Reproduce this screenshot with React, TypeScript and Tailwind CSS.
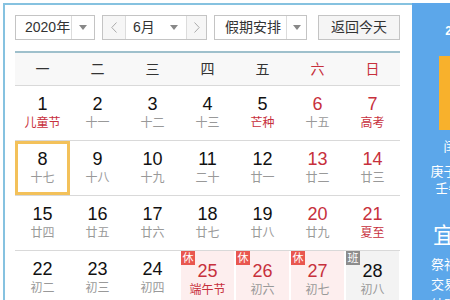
import React from 'react';

type Day = {
  d: number;
  lunar: string;
  red?: boolean;
  lunarRed?: boolean;
  badge?: 'rest' | 'work';
  today?: boolean;
};

const weeks: Day[][] = [
  [
    { d: 1, lunar: '儿童节', lunarRed: true },
    { d: 2, lunar: '十一' },
    { d: 3, lunar: '十二' },
    { d: 4, lunar: '十三' },
    { d: 5, lunar: '芒种', lunarRed: true },
    { d: 6, lunar: '十五', red: true },
    { d: 7, lunar: '高考', red: true, lunarRed: true },
  ],
  [
    { d: 8, lunar: '十七', today: true },
    { d: 9, lunar: '十八' },
    { d: 10, lunar: '十九' },
    { d: 11, lunar: '二十' },
    { d: 12, lunar: '廿一' },
    { d: 13, lunar: '廿二', red: true },
    { d: 14, lunar: '廿三', red: true },
  ],
  [
    { d: 15, lunar: '廿四' },
    { d: 16, lunar: '廿五' },
    { d: 17, lunar: '廿六' },
    { d: 18, lunar: '廿七' },
    { d: 19, lunar: '廿八' },
    { d: 20, lunar: '廿九', red: true },
    { d: 21, lunar: '夏至', red: true, lunarRed: true },
  ],
  [
    { d: 22, lunar: '初二' },
    { d: 23, lunar: '初三' },
    { d: 24, lunar: '初四' },
    { d: 25, lunar: '端午节', red: true, lunarRed: true, badge: 'rest' },
    { d: 26, lunar: '初六', red: true, badge: 'rest' },
    { d: 27, lunar: '初七', red: true, badge: 'rest' },
    { d: 28, lunar: '初八', badge: 'work' },
  ],
];

const weekdays = ['一', '二', '三', '四', '五', '六', '日'];

const Caret = () => (
  <svg width="8" height="5" viewBox="0 0 8 5" className="text-[#888]">
    <path d="M0 0h8L4 5z" fill="currentColor" />
  </svg>
);

const Chevron = ({ dir }: { dir: 'l' | 'r' }) => (
  <svg width="6" height="11" viewBox="0 0 6 11" fill="none" stroke="#aaa" strokeWidth="1">
    {dir === 'l' ? <path d="M5.5 0.5L0.8 5.5l4.7 5" /> : <path d="M0.5 0.5l4.7 5-4.7 5" />}
  </svg>
);

const Cell = ({ day }: { day: Day }) => {
  const bg =
    day.badge === 'rest' ? 'bg-[#fdeeee]' : day.badge === 'work' ? 'bg-[#f3f3f3]' : 'bg-white';
  return (
    <div className={`relative h-[54px] flex flex-col items-center justify-center ${bg} ${day.badge ? 'mx-[1px]' : ''}`}>
      {day.today && <div className="absolute inset-0 border-[3px] border-[#f3c15a]" />}
      {day.badge && (
        <div
          className={`absolute left-0 top-0 w-[14px] h-[14px] flex items-center justify-center text-[11px] leading-none text-white ${
            day.badge === 'rest' ? 'bg-[#e9574f]' : 'bg-[#8c8c8c]'
          }`}
        >
          {day.badge === 'rest' ? '休' : '班'}
        </div>
      )}
      <div className={`text-[18px] leading-[20px] ${day.red ? 'text-[#c7303c]' : 'text-[#111]'} ${day.badge ? 'mt-[4px]' : ''}`}>
        {day.d}
      </div>
      <div className={`text-[12px] leading-[17px] mt-[1px] ${day.lunarRed ? 'text-[#c7303c]' : 'text-[#999]'}`}>
        {day.lunar}
      </div>
    </div>
  );
};

export default function App() {
  return (
    <div
      className="w-[450px] h-[300px] overflow-hidden bg-white"
      style={{ fontFamily: '"Liberation Sans", Arial, "Noto Sans CJK SC", sans-serif' }}
    >
      <div className="flex pt-[3px] pl-[3px]">
        {/* left calendar */}
        <div className="w-[409px] h-[297px] shrink-0 border-l-2 border-t-2 border-[#86c2e0] pl-[10px] pr-[10px] pt-[10px]">
          {/* controls */}
          <div className="flex items-center h-[25px] text-[14px] text-[#333]">
            <div className="flex h-[25px] w-[80px] border border-[#c4c4c4] bg-white">
              <div className="w-[55px] flex items-center pl-[9px]">2020年</div>
              <div className="flex-1 flex items-center justify-center border-l border-[#dcdcdc]">
                <Caret />
              </div>
            </div>
            <div className="flex h-[25px] w-[105px] ml-[7px] border border-[#c4c4c4] bg-white">
              <div className="w-[23px] flex items-center justify-center bg-[#f6f6f6] border-r border-[#dcdcdc]">
                <Chevron dir="l" />
              </div>
              <div className="w-[60px] flex items-center justify-between pl-[7px] pr-[8px]">
                <span>6月</span>
                <Caret />
              </div>
              <div className="flex-1 flex items-center justify-center bg-[#f6f6f6] border-l border-[#dcdcdc]">
                <Chevron dir="r" />
              </div>
            </div>
            <div className="flex h-[25px] w-[93px] ml-[7px] border border-[#c4c4c4] bg-white">
              <div className="w-[71px] flex items-center pl-[10px]">假期安排</div>
              <div className="flex-1 flex items-center justify-center border-l border-[#dcdcdc]">
                <Caret />
              </div>
            </div>
            <div className="flex h-[25px] w-[82px] ml-[11px] items-center justify-center border border-[#c4c4c4] bg-[#f5f5f5]">
              返回今天
            </div>
          </div>

          {/* grid */}
          <div className="mt-[11px] w-[385px] border-t-2 border-[#9fc0cc]">
            <div className="grid grid-cols-7 h-[33px] bg-[#f8f8f8] border-b border-[#d9d9d9] text-[14px]">
              {weekdays.map((w, i) => (
                <div key={w} className={`flex items-center justify-center ${i >= 5 ? 'text-[#c7303c]' : 'text-[#333]'}`}>
                  {w}
                </div>
              ))}
            </div>
            {weeks.map((week, wi) => (
              <div key={wi} className="grid grid-cols-7 border-b border-[#d9d9d9]">
                {week.map((day) => (
                  <Cell key={day.d} day={day} />
                ))}
              </div>
            ))}
          </div>
        </div>

        {/* right panel */}
        <div className="w-[128px] h-[297px] shrink-0 bg-[#5ca7ea] text-white flex flex-col items-center">
          <div className="mt-[20px] text-[12px] leading-[16px] font-bold">2020-06-08</div>
          <div className="mt-[17px] w-[74px] h-[74px] bg-[#f8b12c] flex items-center justify-center text-[52px] font-bold">
            8
          </div>
          <div className="mt-[9px] text-[13px] leading-[16px]">闰四月十七</div>
          <div className="mt-[9px] text-[13px] leading-[16px]">庚子年【鼠年】</div>
          <div className="mt-[1px] text-[13px] leading-[16px]">壬午月 辛巳日</div>
          <div className="mt-[12px] w-[108px] h-px bg-[#a9cff3]" />
          <div className="w-full flex mt-[16px]">
            <div className="flex-1 flex flex-col items-center">
              <div className="text-[22px] leading-[22px]">宜</div>
              <div className="mt-[8px] text-[13px] leading-[20px] flex flex-col items-center">
                <span>祭祀</span>
                <span>交易</span>
                <span>纳财</span>
              </div>
            </div>
            <div className="flex-1 flex flex-col items-center">
              <div className="text-[22px] leading-[22px]">忌</div>
              <div className="mt-[8px] text-[13px] leading-[20px] flex flex-col items-center">
                <span>嫁娶</span>
                <span>安葬</span>
                <span>出行</span>
              </div>
            </div>
          </div>
        </div>
      </div>
    </div>
  );
}
